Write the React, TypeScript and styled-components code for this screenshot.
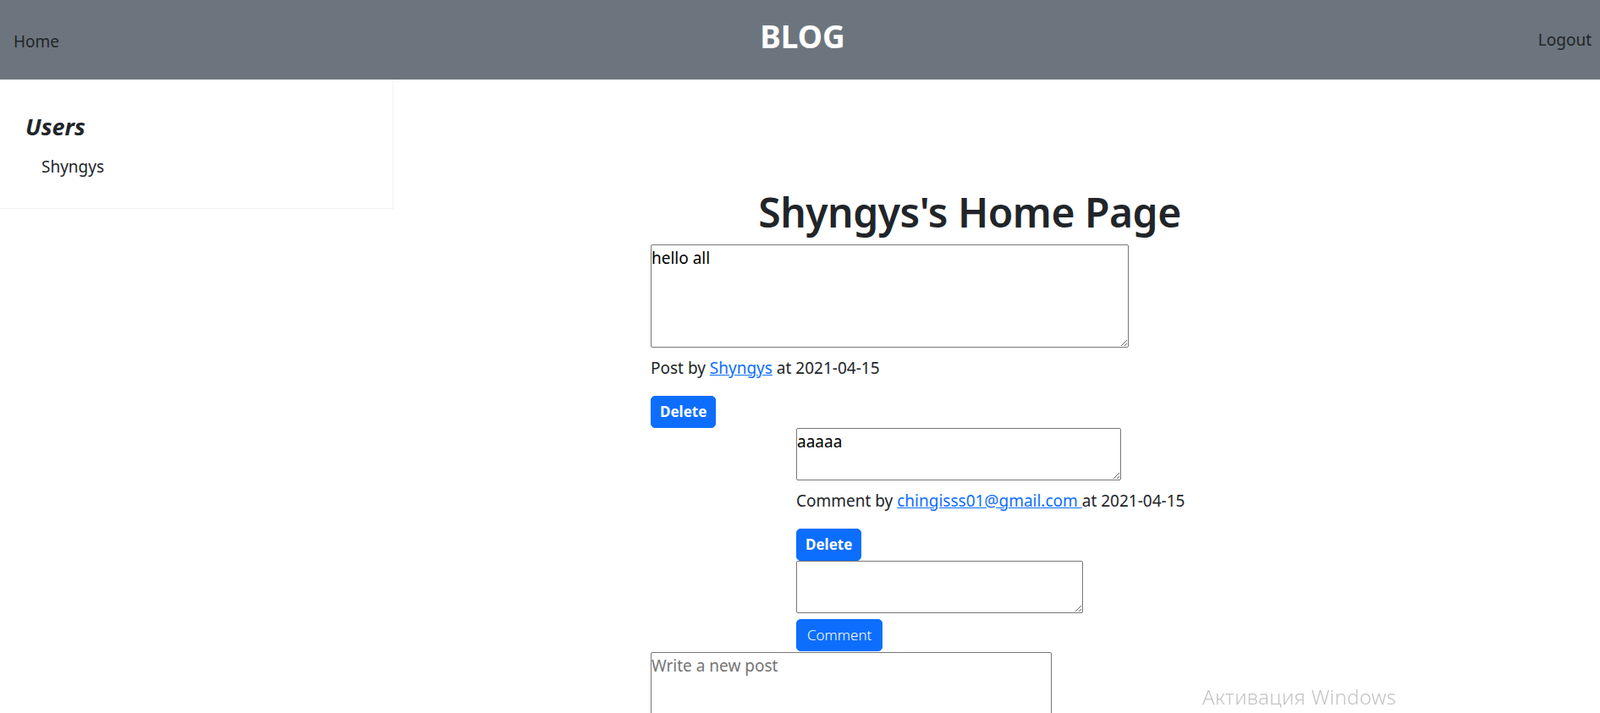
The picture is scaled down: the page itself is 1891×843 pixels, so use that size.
import React from "react";
import styled, { createGlobalStyle } from "styled-components";

const Global = createGlobalStyle`
  html, body { margin: 0; padding: 0; background: #fff; }
  body {
    font-family: "Noto Sans", "Open Sans", sans-serif;
    font-size: 20px;
    line-height: 1.5;
    color: #212529;
    overflow: hidden;
  }
  * { box-sizing: border-box; }
`;

const NavBar = styled.nav`
  height: 94px;
  background: #6c757d;
  display: grid;
  grid-template-columns: 1fr auto 1fr;
  align-items: center;
  padding: 0 10px 0 16px;
`;

const NavLink = styled.a<{ $end?: boolean }>`
  color: #212529;
  text-decoration: none;
  font-size: 19px;
  justify-self: ${(p) => (p.$end ? "end" : "start")};
  margin-top: ${(p) => (p.$end ? "0px" : "4px")};
`;

const Brand = styled.div`
  color: #fff;
  font-size: 37px;
  font-weight: 700;
  line-height: 1;
  margin-top: -10px;
`;

const Layout = styled.div`
  display: flex;
  align-items: flex-start;
`;

const Sidebar = styled.aside`
  width: 465px;
  height: 153px;
  border-right: 1px solid #f1f2f3;
  border-bottom: 1px solid #f1f2f3;
  padding: 38px 30px 0;
`;

const SideTitle = styled.h4`
  margin: 0;
  font-size: 27px;
  font-style: italic;
  font-weight: 700;
  line-height: 1.3;
`;

const SideItem = styled.div`
  margin: 16px 0 0 19px;
  font-size: 19px;
`;

const Main = styled.main`
  padding: 128px 0 0 304px;
  width: 1060px;
`;

const Title = styled.h1`
  margin: 0 0 9px 0;
  width: 754px;
  text-align: center;
  font-size: 48px;
  font-weight: 600;
  line-height: 1.2;
  letter-spacing: -0.5px;
`;

const Area = styled.textarea<{ $w: number; $h: number }>`
  display: block;
  width: ${(p) => p.$w}px;
  height: ${(p) => p.$h}px;
  border: 1px solid #767676;
  border-radius: 2px;
  padding: 3px 0 1px;
  font-family: "Noto Sans", "Open Sans", sans-serif;
  font-size: 19px;
  line-height: 1.3;
  color: #000;
  resize: both;
  &::placeholder { color: #757575; }
`;

const Meta = styled.p`
  margin: 9px 0 18px 0;
  font-size: 19px;
  line-height: 30px;
  & a { color: #0d6efd; text-decoration: underline; }
`;

const Btn = styled.button<{ $bold?: boolean }>`
  display: block;
  background: #0d6efd;
  color: #fff;
  border: 1px solid #0d6efd;
  border-radius: 5px;
  font-family: "Noto Sans", "Open Sans", sans-serif;
  font-size: 17px;
  font-weight: ${(p) => (p.$bold ? 700 : 300)};
  line-height: 26px;
  height: 38px;
  padding: 0 ${(p) => (p.$bold ? 10 : 12)}px;
  cursor: pointer;
`;

const Comments = styled.div`
  margin-left: 172px;
`;

const Gap = styled.div<{ $h: number }>`
  height: ${(p) => p.$h}px;
`;

const Watermark = styled.div`
  position: fixed;
  left: 1421px;
  top: 806px;
  font-family: "Noto Sans", sans-serif;
  font-size: 24px;
  font-weight: 300;
  letter-spacing: 0.3px;
  color: #c4c4c4;
  pointer-events: none;
`;

export default function App() {
  return (
    <>
      <Global />
      <NavBar>
        <NavLink href="#">Home</NavLink>
        <Brand>BLOG</Brand>
        <NavLink href="#" $end>Logout</NavLink>
      </NavBar>
      <Layout>
        <Sidebar>
          <SideTitle>Users</SideTitle>
          <SideItem>Shyngys</SideItem>
        </Sidebar>
        <Main>
          <Title>Shyngys's Home Page</Title>
          <Area $w={565} $h={122} defaultValue="hello all" />
          <Meta>
            Post by <a href="#">Shyngys</a> at 2021-04-15
          </Meta>
          <Btn $bold>Delete</Btn>
          <Comments>
            <Area $w={384} $h={62} defaultValue="aaaaa" />
            <Meta>
              Comment by <a href="#">chingisss01@gmail.com </a> at 2021-04-15
            </Meta>
            <Btn $bold>Delete</Btn>
            <Area $w={339} $h={62} />
            <Gap $h={7} />
            <Btn>Comment</Btn>
          </Comments>
          <Gap $h={1} />
          <Area $w={474} $h={122} placeholder="Write a new post" />
        </Main>
      </Layout>
      <Watermark>Активация Windows</Watermark>
    </>
  );
}
